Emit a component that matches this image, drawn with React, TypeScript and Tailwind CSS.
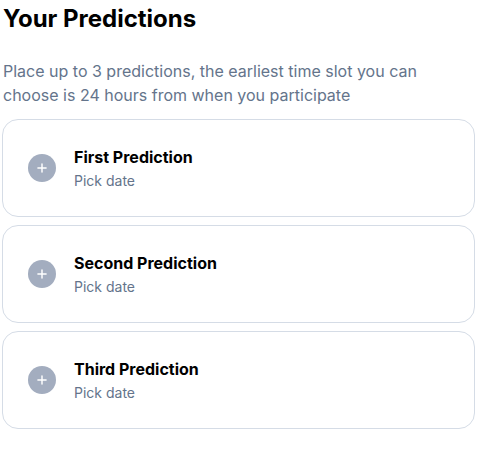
import { Plus } from "lucide-react";

const predictions = ["First Prediction", "Second Prediction", "Third Prediction"];

function PredictionCard({ label }: { label: string }) {
  return (
    <button
      type="button"
      className="flex h-[98px] w-full items-center gap-[18px] rounded-2xl border border-[#d5dce6] bg-white pl-[25px] text-left"
    >
      <span className="flex h-7 w-7 shrink-0 items-center justify-center rounded-full bg-[#a3adbf]">
        <Plus className="h-3.5 w-3.5 text-white" strokeWidth={2.5} />
      </span>
      <span className="flex flex-col pt-px">
        <span className="text-base leading-6 font-bold text-black">{label}</span>
        <span className="text-sm leading-[23px] text-[#64748b]">Pick date</span>
      </span>
    </button>
  );
}

export default function App() {
  return (
    <div
      className="min-h-screen bg-white pl-[2px] pr-[11px]"
      style={{ fontFamily: "Inter, 'Noto Sans', sans-serif" }}
    >
      <h2 className="pt-[3px] pl-px text-2xl leading-8 font-bold text-black">Your Predictions</h2>
      <p className="mt-[24px] pl-px text-base leading-6 text-[#64748b]">
        Place up to 3 predictions, the earliest time slot you can choose is 24 hours from when you participate
      </p>
      <div className="mt-[12px] flex flex-col gap-2">
        {predictions.map((p) => (
          <PredictionCard key={p} label={p} />
        ))}
      </div>
    </div>
  );
}
